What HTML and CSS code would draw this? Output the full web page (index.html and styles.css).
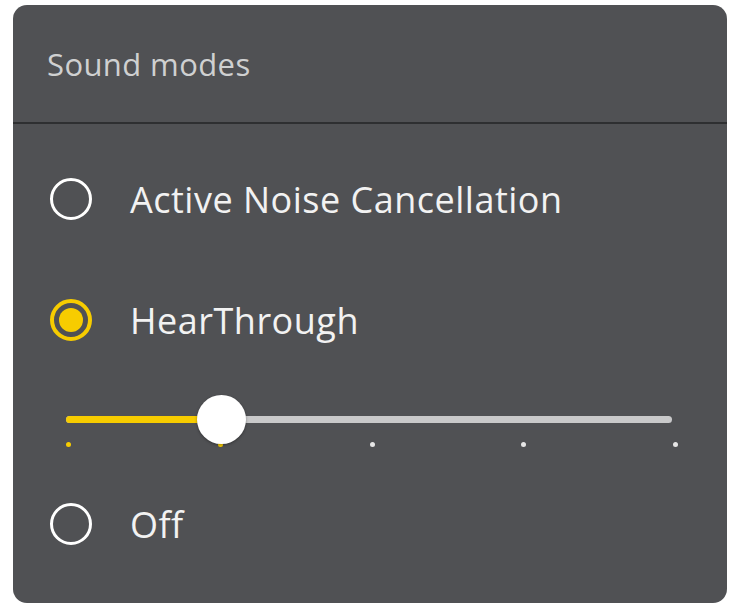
FILE: index.html
```html
<!DOCTYPE html>
<html>
<head>
<meta charset="utf-8">
<link rel="stylesheet" href="styles.css">
</head>
<body>
<div class="card">
  <div class="header">Sound modes</div>
  <div class="divider"></div>
  <div class="options">
    <div class="option option-anc">
      <span class="radio"></span>
      <span class="label">Active Noise Cancellation</span>
    </div>
    <div class="option option-hear">
      <span class="radio radio-on"><span class="dot"></span></span>
      <span class="label">HearThrough</span>
    </div>
    <div class="slider">
      <div class="track">
        <div class="fill" style="width: 25.5%"></div>
        <div class="thumb" style="left: 25.5%"></div>
      </div>
      <div class="ticks">
        <span class="tick tick-on"></span>
        <span class="tick tick-on"></span>
        <span class="tick"></span>
        <span class="tick"></span>
        <span class="tick"></span>
      </div>
    </div>
    <div class="option option-off">
      <span class="radio"></span>
      <span class="label">Off</span>
    </div>
  </div>
</div>
</body>
</html>
```
FILE: styles.css
```css
html, body {
  margin: 0;
  padding: 0;
  background: #ffffff;
}
body {
  font-family: "Open Sans", "Noto Sans", sans-serif;
  width: 738px;
  height: 614px;
  overflow: hidden;
}
.card {
  margin: 5px 0 0 13px;
  width: 714px;
  height: 598px;
  background: #505154;
  border-radius: 14px;
  display: flex;
  flex-direction: column;
  overflow: hidden;
}
.header {
  height: 117px;
  box-sizing: border-box;
  padding: 39px 0 0 34px;
  font-size: 31px;
  line-height: 40px;
  color: #cfd0d1;
  letter-spacing: 0.4px;
}
.divider {
  height: 2px;
  background: #2e2f31;
}
.options {
  display: flex;
  flex-direction: column;
}
.option {
  display: flex;
  align-items: center;
  height: 48px;
  padding-left: 37px;
}
.option-anc { margin-top: 51px; }
.option-hear { margin-top: 73px; }
.option-off { margin-top: 53px; }
.radio {
  width: 42px;
  height: 42px;
  box-sizing: border-box;
  border: 3px solid #ffffff;
  border-radius: 50%;
  display: flex;
  align-items: center;
  justify-content: center;
  flex: none;
}
.radio-on {
  border: 4px solid #f7cc00;
}
.dot {
  width: 24px;
  height: 24px;
  border-radius: 50%;
  background: #f7cc00;
}
.label {
  margin-left: 38px;
  font-size: 36px;
  color: #f2f2f2;
  letter-spacing: 0.5px;
}
.slider {
  margin-top: 72px;
  padding: 0 55px 0 53px;
  display: flex;
  flex-direction: column;
}
.track {
  position: relative;
  height: 7px;
  border-radius: 4px;
  background: #c9c9ca;
}
.fill {
  height: 7px;
  border-radius: 4px;
  background: #f7cc00;
}
.thumb {
  position: absolute;
  top: 50%;
  width: 49px;
  height: 49px;
  margin: -25px 0 0 -24px;
  border-radius: 50%;
  background: #ffffff;
  box-shadow: 0 1px 3px rgba(0,0,0,0.35);
}
.ticks {
  display: flex;
  justify-content: space-between;
  margin: 19px -6px 0 0;
  padding: 0;
}
.tick {
  width: 5px;
  height: 5px;
  border-radius: 50%;
  background: #e6e6e6;
}
.tick-on {
  background: #f7cc00;
}
```
